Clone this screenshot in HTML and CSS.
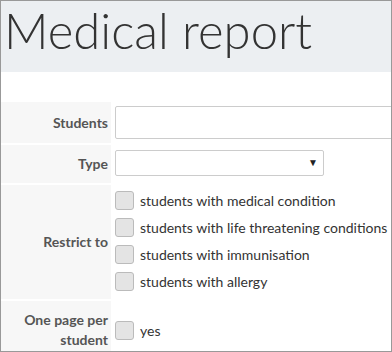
FILE: index.html
```html
<!DOCTYPE html>
<html>

<head>
  <meta charset="UTF-8">
  <title>Medical report</title>
  <link rel="stylesheet" href="styles.css">
</head>

<body>
  <div class="page">
    <div class="page-header">
      <h1>Medical report</h1>
    </div>

    <form class="report-form">
      <!-- Students -->
      <div class="label-cell">Students</div>
      <div class="field-cell">
        <input type="text" class="text-input">
      </div>

      <!-- Type -->
      <div class="label-cell">Type</div>
      <div class="field-cell">
        <div class="select-box">
          <select></select>
          <span class="arrow">&#9660;</span>
        </div>
      </div>

      <!-- Restrict to -->
      <div class="label-cell">Restrict to</div>
      <div class="field-cell checks">
        <label class="check"><input type="checkbox"> students with medical condition</label>
        <label class="check"><input type="checkbox"> students with life threatening conditions</label>
        <label class="check"><input type="checkbox"> students with immunisation</label>
        <label class="check"><input type="checkbox"> students with allergy</label>
      </div>

      <!-- One page per student -->
      <div class="label-cell tall">One page per student</div>
      <div class="field-cell">
        <label class="check"><input type="checkbox"> yes</label>
      </div>
    </form>
  </div>
</body>

</html>
```

FILE: styles.css
```css
body {
  margin: 0;
  padding: 0;
  font-family: Lato, "Open Sans", sans-serif;
  background-color: #fff;
}

.page {
  width: 390px;
  height: 350px;
  border: 1px solid #999;
  overflow: hidden;
}

.page-header {
  background-color: #eceff2;
  height: 71px;
  padding: 0 3px;
}

.page-header h1 {
  margin: 0;
  font-weight: 300;
  font-size: 49px;
  line-height: 58px;
  color: #333;
  white-space: nowrap;
}

.report-form {
  margin-top: 30px;
  display: grid;
  grid-template-columns: 110px 1fr;
  row-gap: 2px;
}

.label-cell {
  background-color: #f7f7f7;
  color: #555;
  font-weight: bold;
  font-size: 14px;
  line-height: 20px;
  text-align: right;
  padding: 0 3px;
  display: flex;
  align-items: center;
  justify-content: flex-end;
}

.label-cell.tall {
  padding: 9px 3px;
}

.field-cell {
  padding: 4px 0 4px 4px;
  display: flex;
  align-items: center;
  min-width: 0;
}

.text-input {
  width: 300px;
  height: 33px;
  box-sizing: border-box;
  border: 1px solid #ccc;
  border-radius: 2px;
  flex-shrink: 0;
}

.select-box {
  position: relative;
  width: 209px;
  height: 26px;
  margin: 1px 0 3px;
}

.select-box select {
  width: 100%;
  height: 100%;
  appearance: none;
  border: 1px solid #ccc;
  border-radius: 2px;
  background: #fff;
}

.select-box .arrow {
  position: absolute;
  right: 6px;
  top: 6px;
  font-size: 10px;
  color: #222;
  pointer-events: none;
}

.checks {
  flex-direction: column;
  align-items: flex-start;
  gap: 8px;
  padding-top: 6px;
  padding-bottom: 8px;
}

.check {
  display: flex;
  align-items: center;
  font-size: 14px;
  color: #333;
  white-space: nowrap;
}

.check input {
  appearance: none;
  width: 19px;
  height: 19px;
  margin: 0 6px 0 0;
  box-sizing: border-box;
  border: 1px solid #bbb;
  border-radius: 3px;
  background-color: #e4e4e4;
}
```
